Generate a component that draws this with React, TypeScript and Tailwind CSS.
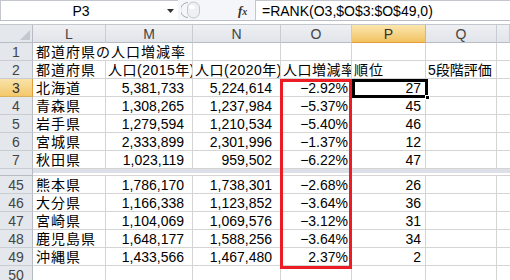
import React from "react";

const W = ["w-[33px]", "w-[73px]", "w-[87px]", "w-[88px]", "w-[71px]", "w-[74px]", "w-[71px]", "flex-1"];

type Row = { n: string; c: (string | null)[] };

const top: Row[] = [
  { n: "3", c: ["北海道", "5,381,733", "5,224,614", "−2.92%", "27"] },
  { n: "4", c: ["青森県", "1,308,265", "1,237,984", "−5.37%", "45"] },
  { n: "5", c: ["岩手県", "1,279,594", "1,210,534", "−5.40%", "46"] },
  { n: "6", c: ["宮城県", "2,333,899", "2,301,996", "−1.37%", "12"] },
  { n: "7", c: ["秋田県", "1,023,119", "959,502", "−6.22%", "47"] },
];
const bottom: Row[] = [
  { n: "45", c: ["熊本県", "1,786,170", "1,738,301", "−2.68%", "26"] },
  { n: "46", c: ["大分県", "1,166,338", "1,123,852", "−3.64%", "36"] },
  { n: "47", c: ["宮崎県", "1,104,069", "1,069,576", "−3.12%", "31"] },
  { n: "48", c: ["鹿児島県", "1,648,177", "1,588,256", "−3.64%", "34"] },
  { n: "49", c: ["沖縄県", "1,433,566", "1,467,480", "2.37%", "2"] },
];

function RowHeader({ n, active }: { n: string; active?: boolean }) {
  return (
    <div
      className={`w-[33px] h-full flex items-center justify-center border-r border-b text-[14px] tracking-normal ${
        active
          ? "bg-gradient-to-b from-[#f9e3a9] to-[#f3c868] border-r-[#e39b3c] border-b-[#d8b35f] text-[#333]"
          : "bg-[#e4e7ec] border-r-[#b7bcc4] border-b-[#c9cdd3] text-[#444]"
      }`}
    >
      {n}
    </div>
  );
}

function DataRow({ r }: { r: Row }) {
  const active = r.n === "3";
  return (
    <div className="flex h-[18px]">
      <RowHeader n={r.n} active={active} />
      <div className={`${W[1]} h-full border-r border-b border-[#d4d4d4] pl-[3px] flex items-center whitespace-nowrap overflow-hidden tracking-[1px]`}>{r.c[0]}</div>
      <div className={`${W[2]} h-full border-r border-b border-[#d4d4d4] pr-[8px] flex items-center justify-end whitespace-nowrap`}>{r.c[1]}</div>
      <div className={`${W[3]} h-full border-r border-b border-[#d4d4d4] pr-[8px] flex items-center justify-end whitespace-nowrap`}>{r.c[2]}</div>
      <div className={`${W[4]} h-full border-r border-b border-[#d4d4d4] pr-[3px] flex items-center justify-end whitespace-nowrap`}>{r.c[3]}</div>
      <div className={`${W[5]} h-full border-r border-b border-[#d4d4d4] pr-[4px] flex items-center justify-end whitespace-nowrap`}>{r.c[4]}</div>
      <div className={`${W[6]} h-full border-r border-b border-[#d4d4d4]`}></div>
      <div className="flex-1 h-full border-b border-[#d4d4d4]"></div>
    </div>
  );
}

export default function App() {
  const letters = ["L", "M", "N", "O", "P", "Q", ""];
  return (
    <div
      className="relative w-[510px] h-[280px] overflow-hidden bg-white text-black text-[14px] leading-none"
      style={{ fontFamily: '"Liberation Sans", "Noto Sans CJK JP", sans-serif' }}
    >
      {/* formula bar */}
      <div className="flex h-[21px] border-b border-[#b9bec6] bg-[#f4f6f9]">
        <div className="w-[163px] h-[20px] bg-white border-t border-l border-[#c4c8ce] flex items-center justify-center text-[14px] pr-[2px]">
          P3
        </div>
        <div className="w-[15px] h-[20px] bg-white border-t border-[#c4c8ce] flex items-center justify-center">
          <svg width="7" height="4" viewBox="0 0 7 4"><path d="M0 0h7L3.5 4z" fill="#333" /></svg>
        </div>
        <div className="w-[60px] h-[20px] flex items-center pl-[3px]">
          <svg width="20" height="18" viewBox="0 0 20 18">
            <path d="M7 1.5 A7.5 7.5 0 0 0 7 16.5" fill="none" stroke="#a8adb5" strokeWidth="1" />
            <rect x="6.5" y="1" width="12" height="16" rx="6" fill="#eef0f3" stroke="#c3c7cd" />
            <ellipse cx="11" cy="6" rx="3" ry="2" fill="#fff" />
          </svg>
        </div>
        <div className="w-[17px] h-[20px] flex items-center justify-start">
          <span className="italic font-bold text-[13px] text-[#333]" style={{ fontFamily: '"Liberation Serif", serif' }}>
            f<span className="text-[10px]">x</span>
          </span>
        </div>
        <div className="flex-1 h-[20px] bg-white border-t border-l border-[#c4c8ce] flex items-center pl-[6px] whitespace-nowrap">
          =RANK(O3,$O$3:$O$49,0)
        </div>
      </div>
      <div className="h-[4px] bg-[#ffffff] border-b border-[#c4c8ce]"></div>

      {/* column header */}
      <div className="flex h-[18px]">
        <div className="w-[33px] h-full bg-[#e4e7ec] border-r border-b border-[#b7bcc4] relative">
          <svg className="absolute right-[2px] bottom-[2px]" width="10" height="10" viewBox="0 0 10 10">
            <path d="M10 0V10H0z" fill="#c3c7ce" />
          </svg>
        </div>
        {letters.map((l, i) => (
          <div
            key={i}
            className={`${W[i + 1]} h-full flex items-center justify-center border-b border-r text-[14px] ${
              l === "P"
                ? "bg-gradient-to-b from-[#fae6ae] to-[#f2c35f] border-b-[#e39b3c] border-r-[#dcb46a] text-[#333]"
                : "bg-gradient-to-b from-[#eef0f3] to-[#e1e4e9] border-b-[#b7bcc4] border-r-[#c9cdd3] text-[#444]"
            }`}
          >
            {l}
          </div>
        ))}
      </div>

      {/* row 1 */}
      <div className="flex h-[18px]">
        <RowHeader n="1" />
        <div className={`${W[1]} h-full border-b border-[#d4d4d4] pl-[3px] flex items-center whitespace-nowrap tracking-[1px]`}>都道府県の人口増減率</div>
        <div className={`${W[2]} h-full border-r border-b border-[#d4d4d4]`}></div>
        <div className={`${W[3]} h-full border-r border-b border-[#d4d4d4]`}></div>
        <div className={`${W[4]} h-full border-r border-b border-[#d4d4d4]`}></div>
        <div className={`${W[5]} h-full border-r border-b border-[#d4d4d4]`}></div>
        <div className={`${W[6]} h-full border-r border-b border-[#d4d4d4]`}></div>
        <div className="flex-1 h-full border-b border-[#d4d4d4]"></div>
      </div>

      {/* row 2 */}
      <div className="flex h-[18px]">
        <RowHeader n="2" />
        <div className={`${W[1]} h-full border-r border-b border-[#d4d4d4] pl-[3px] flex items-center whitespace-nowrap overflow-hidden tracking-[1px]`}>都道府県</div>
        <div className={`${W[2]} h-full border-r border-b border-[#d4d4d4] pl-[2px] flex items-center whitespace-nowrap overflow-hidden tracking-[0.5px]`}>人口(2015年)</div>
        <div className={`${W[3]} h-full border-r border-b border-[#d4d4d4] pl-[2px] flex items-center whitespace-nowrap overflow-hidden tracking-[0.5px]`}>人口(2020年)</div>
        <div className={`${W[4]} h-full border-r border-b border-[#d4d4d4] pl-[2px] flex items-center whitespace-nowrap overflow-hidden tracking-[0.5px]`}>人口増減率</div>
        <div className={`${W[5]} h-full border-r border-b border-[#d4d4d4] pl-[2px] flex items-center whitespace-nowrap overflow-hidden tracking-[1px]`}>順位</div>
        <div className={`${W[6]} h-full border-r border-b border-[#d4d4d4] pl-[2px] flex items-center whitespace-nowrap`}>5段階評価</div>
        <div className="flex-1 h-full border-b border-[#d4d4d4]"></div>
      </div>

      {top.map((r) => (
        <DataRow key={r.n} r={r} />
      ))}

      {/* hidden rows band */}
      <div className="flex h-[7px]">
        <div className="w-[33px] h-full bg-[#e4e7ec] border-r border-b border-[#b7bcc4]"></div>
        <div className="flex-1 h-full flex flex-col">
          <div className="h-[4px] bg-[#dde0e9]"></div>
          <div className="flex-1 bg-white border-b border-[#d4d4d4]"></div>
        </div>
      </div>

      {bottom.map((r) => (
        <DataRow key={r.n} r={r} />
      ))}

      {/* row 50 */}
      <div className="flex h-[18px]">
        <RowHeader n="50" />
        <div className={`${W[1]} h-full border-r border-[#d4d4d4]`}></div>
        <div className={`${W[2]} h-full border-r border-[#d4d4d4]`}></div>
        <div className={`${W[3]} h-full border-r border-[#d4d4d4]`}></div>
        <div className={`${W[4]} h-full border-r border-[#d4d4d4]`}></div>
        <div className={`${W[5]} h-full border-r border-[#d4d4d4]`}></div>
        <div className={`${W[6]} h-full border-r border-[#d4d4d4]`}></div>
        <div className="flex-1 h-full"></div>
      </div>

      {/* red highlight box */}
      <div className="absolute left-[280px] top-[79px] w-[72px] h-[190px] border-[3px] border-[#ec1c24] pointer-events-none"></div>
      {/* active cell selection */}
      <div className="absolute left-[352px] top-[79px] w-[76px] h-[19px] border-[3px] border-black pointer-events-none"></div>
      <div className="absolute left-[425px] top-[95px] w-[5px] h-[5px] bg-black border border-white pointer-events-none"></div>
    </div>
  );
}
